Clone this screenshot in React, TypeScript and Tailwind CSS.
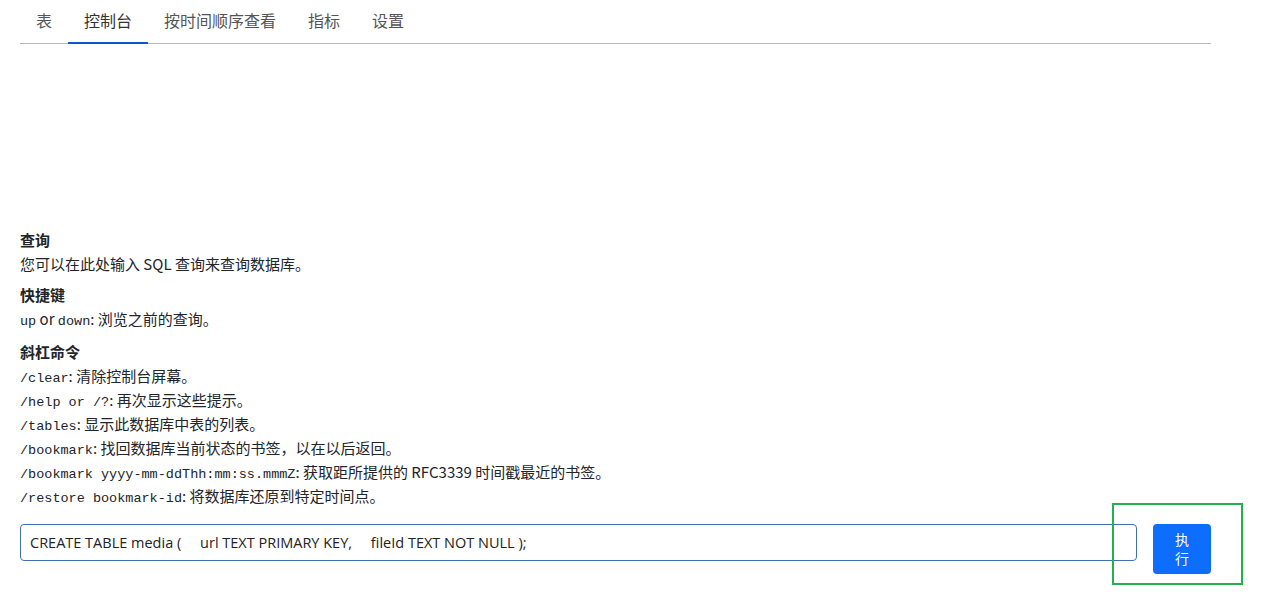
const tabs = ["表", "控制台", "按时间顺序查看", "指标", "设置"];

const commands = [
  { code: "/clear", desc: "清除控制台屏幕。" },
  { code: "/help or /?", desc: "再次显示这些提示。" },
  { code: "/tables", desc: "显示此数据库中表的列表。" },
  { code: "/bookmark", desc: "找回数据库当前状态的书签，以在以后返回。" },
  {
    code: "/bookmark yyyy-mm-ddThh:mm:ss.mmmZ",
    desc: "获取距所提供的 RFC3339 时间戳最近的书签。",
  },
  { code: "/restore bookmark-id", desc: "将数据库还原到特定时间点。" },
];

const Code = ({ children }: { children: React.ReactNode }) => (
  <code className="font-['Liberation_Mono',monospace] text-[13.5px] leading-none text-[#212529]">
    {children}
  </code>
);

export default function App() {
  return (
    <div className="relative min-h-[600px] bg-white font-['Noto_Sans_CJK_SC','Noto_Sans',sans-serif] text-[15px] text-[#212529]">
      <div className="w-[1191px] ml-5">
        <nav className="flex border-b border-[#b8b8b8]">
          {tabs.map((t, i) => (
            <div
              key={t}
              className={`px-4 pt-[8px] pb-[10px] leading-6 -mb-px text-[16px] border-b-2 ${
                i === 1
                  ? "border-[#0a58ca] text-[#333]"
                  : "border-transparent text-[#555]"
              }`}
            >
              {t}
            </div>
          ))}
        </nav>

        <div className="pt-[184px]">
          <h3 className="font-bold text-[15px] leading-6">查询</h3>
          <p className="leading-6 h-6">您可以在此处输入 SQL 查询来查询数据库。</p>

          <h3 className="font-bold text-[15px] leading-6 mt-[7px]">快捷键</h3>
          <p className="leading-6 h-6">
            <Code>up</Code> or <Code>down</Code>: 浏览之前的查询。
          </p>

          <h3 className="font-bold text-[15px] leading-6 mt-[9px]">斜杠命令</h3>
          {commands.map((c) => (
            <p key={c.code} className="leading-6 h-6">
              <Code>{c.code}</Code>: {c.desc}
            </p>
          ))}

          <div className="flex items-start gap-4 mt-[16px]">
            <div className="flex-1 h-[37px] border border-[#3f72b5] rounded-[4px] px-[9px] flex items-center whitespace-pre font-['Open_Sans','Noto_Sans_CJK_SC',sans-serif] text-[14.5px] text-[#222]">
              {"CREATE TABLE media (     url TEXT PRIMARY KEY,     fileId TEXT NOT NULL );"}
            </div>
            <button className="w-[58px] h-[50px] bg-[#0d6efd] rounded-[4px] text-white text-[14px] leading-[19px] flex flex-col items-center justify-center">
              <span>执</span>
              <span>行</span>
            </button>
          </div>
        </div>
      </div>

      <div className="absolute left-[1112px] top-[503px] w-[131px] h-[82px] border-2 border-[#22b14c] pointer-events-none" />
    </div>
  );
}
